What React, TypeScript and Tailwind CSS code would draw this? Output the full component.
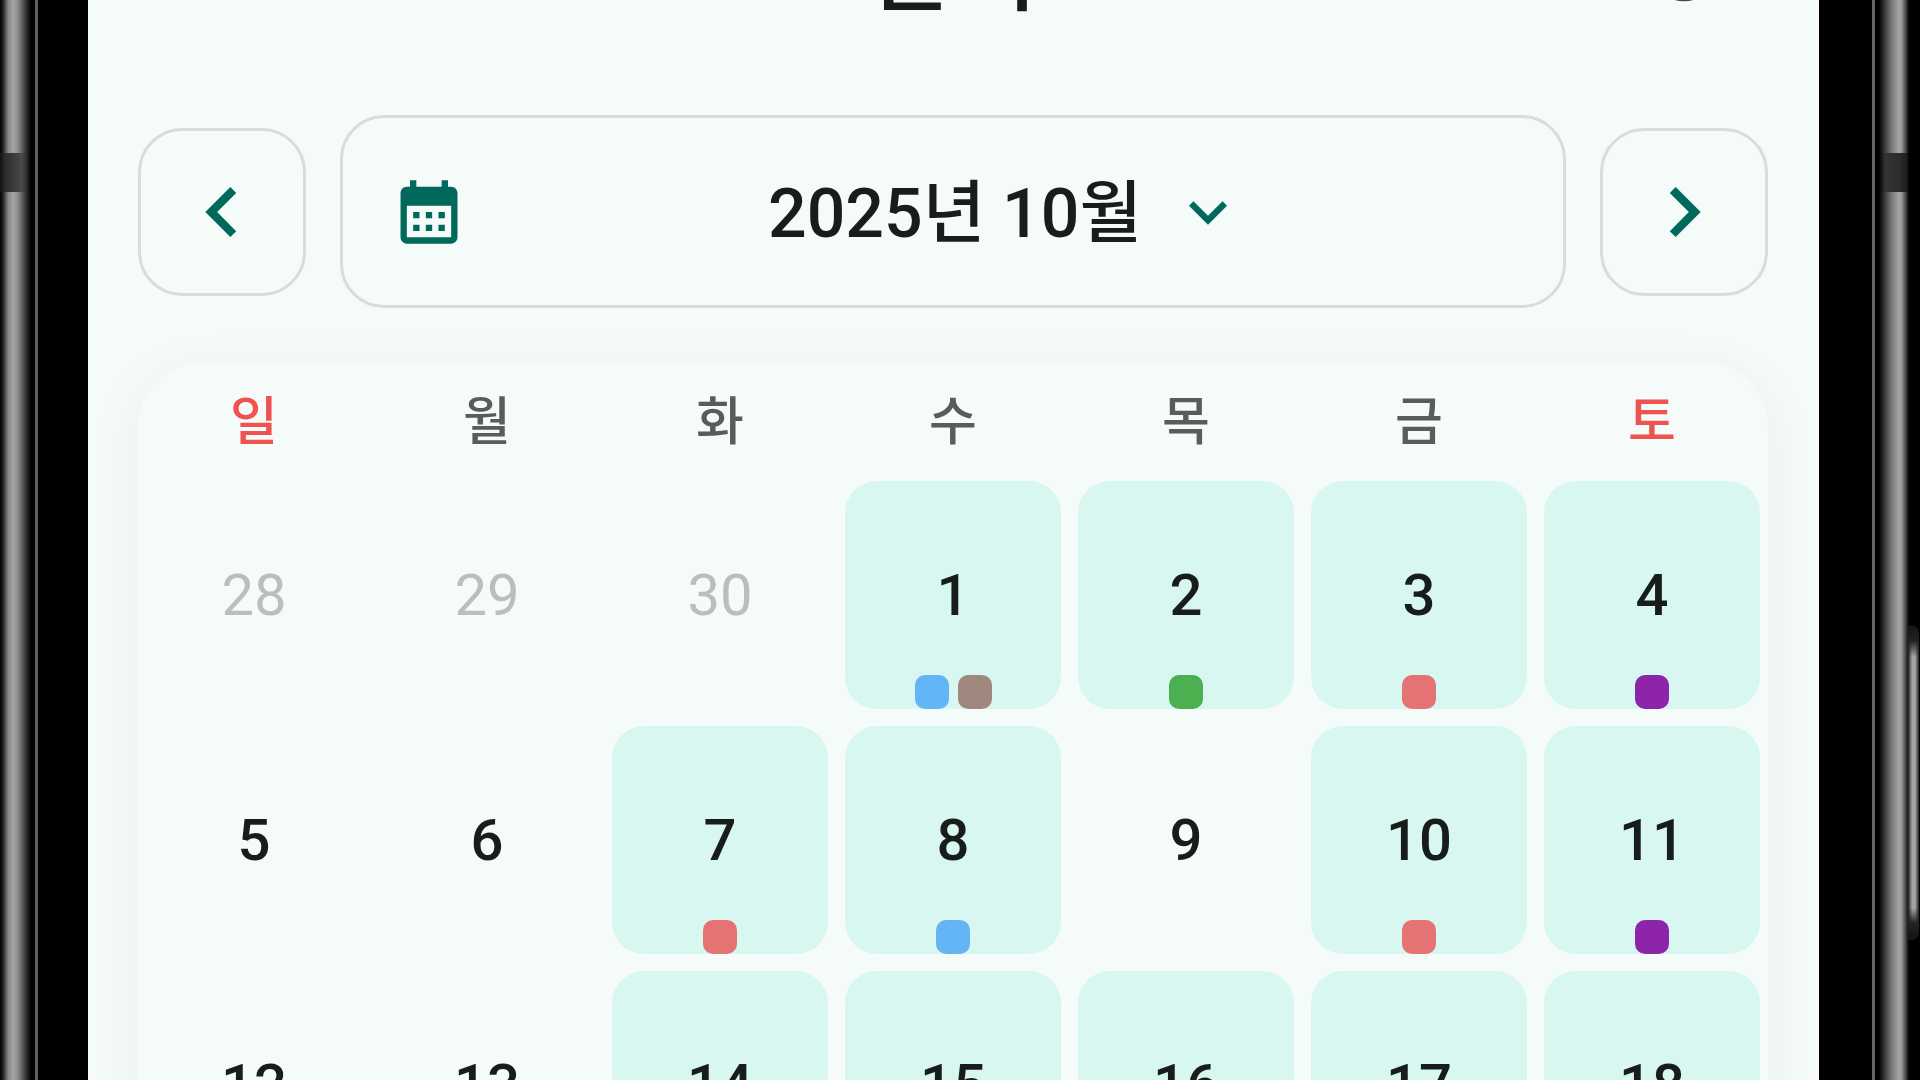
import React from 'react';
import {
  MdCalendarMonth,
  MdChevronLeft,
  MdChevronRight,
  MdInfoOutline,
  MdKeyboardArrowDown,
} from 'react-icons/md';

type Day = {
  date: number;
  outside?: boolean;
  filled?: boolean;
  marks?: string[];
};

const BLUE = 'bg-[#64b5f6]';
const BROWN = 'bg-[#a1887f]';
const GREEN = 'bg-[#4caf50]';
const RED = 'bg-[#e57373]';
const PURPLE = 'bg-[#8e24aa]';

const weekdays = ['일', '월', '화', '수', '목', '금', '토'];

const days: Day[] = [
  { date: 28, outside: true },
  { date: 29, outside: true },
  { date: 30, outside: true },
  { date: 1, filled: true, marks: [BLUE, BROWN] },
  { date: 2, filled: true, marks: [GREEN] },
  { date: 3, filled: true, marks: [RED] },
  { date: 4, filled: true, marks: [PURPLE] },
  { date: 5 },
  { date: 6 },
  { date: 7, filled: true, marks: [RED] },
  { date: 8, filled: true, marks: [BLUE] },
  { date: 9 },
  { date: 10, filled: true, marks: [RED] },
  { date: 11, filled: true, marks: [PURPLE] },
  { date: 12 },
  { date: 13 },
  { date: 14, filled: true },
  { date: 15, filled: true },
  { date: 16, filled: true },
  { date: 17, filled: true },
  { date: 18, filled: true },
];

function LeftFrame() {
  return (
    <div className="flex w-[88px] shrink-0 bg-black">
      <div className="flex w-[35px] flex-col">
        <div className="h-[153px] bg-[linear-gradient(90deg,#000_0px,#222_3px,#858585_8px,#a3a3a3_13px,#8c8c8c_18px,#333_26px,#000_31px)]" />
        <div className="h-[39px] bg-[linear-gradient(90deg,#111_0px,#2c2c2c_5px,#4a4a4a_22px,#333_26px,#000_31px)]" />
        <div className="flex-1 bg-[linear-gradient(90deg,#000_0px,#222_3px,#858585_8px,#a3a3a3_13px,#8c8c8c_18px,#333_26px,#000_31px)]" />
      </div>
      <div className="w-[3px] bg-[#606060]" />
    </div>
  );
}

function RightFrame() {
  return (
    <div className="relative flex w-[101px] shrink-0 bg-black pl-[53px]">
      <div className="w-[3px] bg-[#666]" />
      <div className="ml-1 flex w-[32px] flex-col">
        <div className="h-[153px] bg-[linear-gradient(90deg,#000_0px,#333_5px,#6b6b6b_11px,#a0a0a0_19px,#a0a0a0_22px,#555_26px,#000_30px)]" />
        <div className="h-[39px] bg-[linear-gradient(90deg,#000_0px,#333_6px,#2c2c2c_20px,#1c1c1c_28px,#000_30px)]" />
        <div className="flex-1 bg-[linear-gradient(90deg,#000_0px,#333_5px,#6b6b6b_11px,#a0a0a0_19px,#a0a0a0_22px,#555_26px,#000_30px)]" />
      </div>
      {/* side key */}
      <div className="absolute top-[625px] right-[1px] h-[315px] w-[11px] rounded-r-lg bg-[linear-gradient(180deg,#141414_0px,#222_16px,transparent_32px,transparent_283px,#222_298px,#141414_315px),linear-gradient(90deg,#1a1a1a_0px,#a0a0a0_4px,#a8a8a8_7px,#222_11px)]" />
    </div>
  );
}

function DayCell({ day }: { day: Day }) {
  const tone = day.outside ? 'font-normal text-[#bdbdbd]' : 'font-medium text-[#171d1b]';
  return (
    <button
      type="button"
      className={`relative flex h-[228px] items-center justify-center rounded-[32px] text-[58px] leading-none ${tone} ${day.filled ? 'bg-[#d8f7f0]' : ''}`}
    >
      {day.date}
      {day.marks && (
        <span className="absolute inset-x-0 bottom-0 flex justify-center gap-[9px]">
          {day.marks.map((m) => (
            <span key={m} className={`size-[34px] rounded-[10px] ${m}`} />
          ))}
        </span>
      )}
    </button>
  );
}

export default function App() {
  return (
    <div className="flex h-screen w-full overflow-hidden bg-black font-['Roboto','Noto_Sans_CJK_KR',sans-serif]">
      <LeftFrame />

      <main className="min-w-0 flex-1 overflow-hidden bg-[#f5fbf9] pr-[51px] pl-[50px] text-[#171d1b]">
        <header className="relative -mt-[76px] flex h-24 items-center justify-center">
          <h1 className="text-[92px] leading-none font-medium">달력</h1>
          <button type="button" aria-label="정보" className="absolute top-1 right-11 text-[#3f4947]">
            <MdInfoOutline size={80} />
          </button>
        </header>

        <div className="mt-[95px] flex items-center gap-[34px]">
          <button
            type="button"
            aria-label="이전 달"
            className="flex size-[168px] shrink-0 items-center justify-center rounded-[44px] border-[3px] border-[#d7dddb] text-[#00695c]"
          >
            <MdChevronLeft size={100} />
          </button>

          <button
            type="button"
            aria-haspopup="dialog"
            className="flex h-[193px] min-w-0 flex-1 items-center gap-8 rounded-[44px] border-[3px] border-[#d7dddb] px-12"
          >
            <MdCalendarMonth size={76} className="shrink-0 text-[#00695c]" />
            <span className="flex flex-1 items-center justify-center gap-7">
              <span className="pt-1 text-[68px] leading-none font-medium whitespace-nowrap">2025년 10월</span>
              <MdKeyboardArrowDown size={76} className="shrink-0 text-[#00695c]" />
            </span>
          </button>

          <button
            type="button"
            aria-label="다음 달"
            className="flex size-[168px] shrink-0 items-center justify-center rounded-[44px] border-[3px] border-[#d7dddb] text-[#00695c]"
          >
            <MdChevronRight size={100} />
          </button>
        </div>

        <section className="mt-[55px] rounded-[64px] bg-[#f5fbf9] px-2 pb-4 shadow-[0_12px_56px_rgba(0,0,0,0.055)]">
          <div className="grid h-[118px] grid-cols-7 items-center gap-x-[17px] pt-0.5 text-center text-[52px] leading-none font-medium">
            {weekdays.map((w, i) => (
              <div key={w} className={i === 0 || i === 6 ? 'text-[#ef5350]' : 'text-[#575d5b]'}>
                {w}
              </div>
            ))}
          </div>
          <div className="grid grid-cols-7 gap-[17px]">
            {days.map((d) => (
              <DayCell key={d.date} day={d} />
            ))}
          </div>
        </section>
      </main>

      <RightFrame />
    </div>
  );
}
